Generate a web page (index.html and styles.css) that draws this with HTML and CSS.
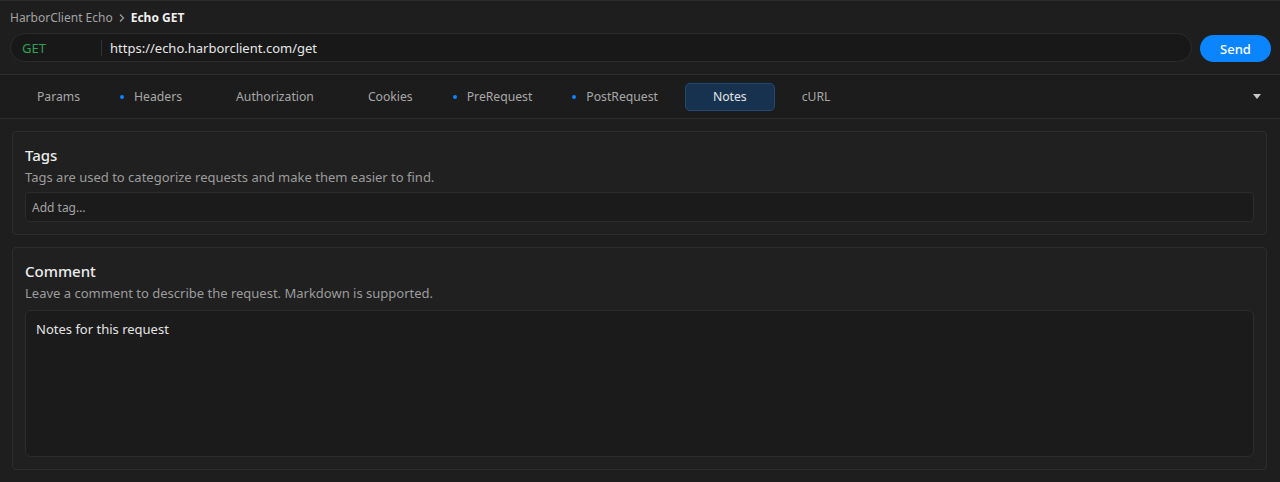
FILE: index.html
```html
<!DOCTYPE html>
<html lang="en">
<head>
    <meta charset="UTF-8">
    <title>Echo GET</title>
    <link rel="stylesheet" href="styles.css">
</head>
<body>
    <div class="cabecalho">
        <div class="trilha">
            <span class="colecao">HarborClient Echo</span>
            <svg class="seta" width="8" height="10" viewBox="0 0 8 10"><path d="M2 1.5 L5.5 5 L2 8.5" fill="none" stroke="#9a9a9a" stroke-width="1.3"/></svg>
            <span class="atual">Echo GET</span>
        </div>
        <div class="linha-url">
            <div class="campo-url">
                <span class="metodo">GET</span>
                <span class="divisor"></span>
                <span class="endereco">https://echo.harborclient.com/get</span>
            </div>
            <button class="enviar">Send</button>
        </div>
    </div>

    <nav class="abas">
        <span class="aba">Params</span>
        <span class="aba"><i class="ponto"></i>Headers</span>
        <span class="aba">Authorization</span>
        <span class="aba">Cookies</span>
        <span class="aba"><i class="ponto"></i>PreRequest</span>
        <span class="aba"><i class="ponto"></i>PostRequest</span>
        <span class="aba ativa">Notes</span>
        <span class="aba">cURL</span>
        <svg class="mais" width="8" height="5" viewBox="0 0 8 5"><path d="M0 0 H8 L4 5 Z" fill="#c8c8c8"/></svg>
    </nav>

    <main class="conteudo">
        <section class="cartao">
            <h3>Tags</h3>
            <p class="descricao">Tags are used to categorize requests and make them easier to find.</p>
            <div class="entrada">Add tag…</div>
        </section>
        <section class="cartao">
            <h3>Comment</h3>
            <p class="descricao">Leave a comment to describe the request. Markdown is supported.</p>
            <div class="texto">Notes for this request</div>
        </section>
    </main>
</body>
</html>
```

FILE: styles.css
```css
* {
    box-sizing: border-box;
    margin: 0;
    padding: 0;
}

body {
    background-color: #1e1e1e;
    font-family: 'Noto Sans', sans-serif;
    color: #dcdcdc;
    width: 1280px;
    height: 482px;
    overflow: hidden;
}

.cabecalho {
    border-top: 1px solid #2b2b2b;
    padding: 7px 9px 12px 10px;
    border-bottom: 1px solid #2e2e2e;
}

.trilha {
    display: flex;
    align-items: center;
    gap: 5px;
    font-size: 12px;
    height: 19px;
    margin-bottom: 6px;
}

.colecao {
    color: #a3a3a3;
}

.atual {
    color: #f0f0f0;
    font-weight: 700;
}

.linha-url {
    display: flex;
    align-items: center;
    gap: 8px;
}

.campo-url {
    flex: 1;
    height: 29px;
    display: flex;
    align-items: center;
    background-color: #181818;
    border: 1px solid #2c2c2c;
    border-radius: 15px;
    padding-left: 11px;
    font-size: 13px;
}

.metodo {
    color: #2fa054;
    width: 79px;
}

.divisor {
    width: 1px;
    height: 16px;
    background-color: #333;
    margin-right: 8px;
}

.endereco {
    color: #e6e6e6;
}

.enviar {
    width: 71px;
    height: 27px;
    border: none;
    border-radius: 14px;
    background-color: #0a84ff;
    color: #fff;
    font-family: inherit;
    font-size: 13px;
    font-weight: 500;
    margin-top: 2px;
}

.abas {
    display: flex;
    align-items: center;
    height: 44px;
    padding: 0 12px 0 10px;
    background-color: #1c1c1c;
    border-bottom: 1px solid #2e2e2e;
    font-size: 12.2px;
}

.aba {
    display: flex;
    align-items: center;
    justify-content: center;
    height: 28px;
    padding: 0 26px;
    color: #a8a8a8;
    border: 1px solid transparent;
    border-radius: 5px;
}

.ponto {
    width: 4px;
    height: 4px;
    border-radius: 50%;
    background-color: #0a84ff;
    margin-left: -14px;
    margin-right: 10px;
}

.ativa {
    padding: 0 27px;
    background-color: #17324f;
    border-color: #1f4a78;
    color: #e4e4e4;
}

.mais {
    margin-left: auto;
    margin-right: 7px;
}

.conteudo {
    display: flex;
    flex-direction: column;
    gap: 12px;
    padding: 12px 13px 12px 12px;
}

.cartao {
    background-color: #202020;
    border: 1px solid #2d2d2d;
    border-radius: 4px;
    padding: 13px 12px 12px 12px;
}

.cartao h3 {
    font-size: 15px;
    font-weight: 500;
    color: #ececec;
    line-height: 20px;
}

.descricao {
    font-size: 13px;
    color: #9c9c9c;
    line-height: 20px;
    margin: 2px 0 5px;
}

.entrada {
    height: 30px;
    background-color: #1b1b1b;
    border: 1px solid #2c2c2c;
    border-radius: 4px;
    padding: 6px 6px;
    font-size: 12px;
    color: #a3a3a3;
}

.texto {
    height: 147px;
    margin-top: 7px;
    background-color: #1b1b1b;
    border: 1px solid #2c2c2c;
    border-radius: 6px;
    padding: 9px 10px;
    font-size: 13px;
    color: #e4e4e4;
}
```
